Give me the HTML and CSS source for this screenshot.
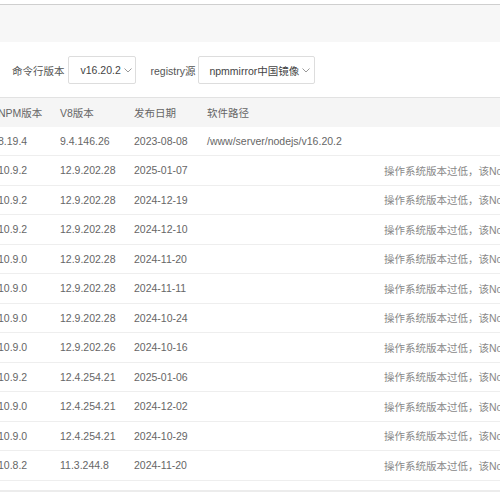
FILE: index.html
```html
<!DOCTYPE html>
<html lang="zh-CN">
<head>
  <meta charset="UTF-8" />
  <title>Node版本管理</title>
  <link rel="stylesheet" href="styles.css">
</head>
<body>
  <div class="topbar"></div>

  <div class="toolbar">
    <span class="label">命令行版本</span>
    <div class="select select-version">
      <span>v16.20.2</span>
      <svg class="caret" width="8" height="5" viewBox="0 0 8 5"><path d="M0.5 0.5 L4 4 L7.5 0.5" fill="none" stroke="#999" stroke-width="1"/></svg>
    </div>
    <span class="label">registry源</span>
    <div class="select select-registry">
      <span>npmmirror中国镜像</span>
      <svg class="caret" width="8" height="5" viewBox="0 0 8 5"><path d="M0.5 0.5 L4 4 L7.5 0.5" fill="none" stroke="#999" stroke-width="1"/></svg>
    </div>
  </div>

  <div class="table-wrap">
    <table class="versions">
      <colgroup>
        <col class="c-npm"><col class="c-v8"><col class="c-date"><col class="c-path"><col class="c-status">
      </colgroup>
      <thead>
        <tr><th>NPM版本</th><th>V8版本</th><th>发布日期</th><th>软件路径</th><th></th></tr>
      </thead>
      <tbody>
        <tr><td>8.19.4</td><td>9.4.146.26</td><td>2023-08-08</td><td>/www/server/nodejs/v16.20.2</td><td></td></tr>
        <tr><td>10.9.2</td><td>12.9.202.28</td><td>2025-01-07</td><td></td><td class="status">操作系统版本过低，该Node版本不支持</td></tr>
        <tr><td>10.9.2</td><td>12.9.202.28</td><td>2024-12-19</td><td></td><td class="status">操作系统版本过低，该Node版本不支持</td></tr>
        <tr><td>10.9.2</td><td>12.9.202.28</td><td>2024-12-10</td><td></td><td class="status">操作系统版本过低，该Node版本不支持</td></tr>
        <tr><td>10.9.0</td><td>12.9.202.28</td><td>2024-11-20</td><td></td><td class="status">操作系统版本过低，该Node版本不支持</td></tr>
        <tr><td>10.9.0</td><td>12.9.202.28</td><td>2024-11-11</td><td></td><td class="status">操作系统版本过低，该Node版本不支持</td></tr>
        <tr><td>10.9.0</td><td>12.9.202.28</td><td>2024-10-24</td><td></td><td class="status">操作系统版本过低，该Node版本不支持</td></tr>
        <tr><td>10.9.0</td><td>12.9.202.26</td><td>2024-10-16</td><td></td><td class="status">操作系统版本过低，该Node版本不支持</td></tr>
        <tr><td>10.9.2</td><td>12.4.254.21</td><td>2025-01-06</td><td></td><td class="status">操作系统版本过低，该Node版本不支持</td></tr>
        <tr><td>10.9.0</td><td>12.4.254.21</td><td>2024-12-02</td><td></td><td class="status">操作系统版本过低，该Node版本不支持</td></tr>
        <tr><td>10.9.0</td><td>12.4.254.21</td><td>2024-10-29</td><td></td><td class="status">操作系统版本过低，该Node版本不支持</td></tr>
        <tr><td>10.8.2</td><td>11.3.244.8</td><td>2024-11-20</td><td></td><td class="status">操作系统版本过低，该Node版本不支持</td></tr>
      </tbody>
    </table>
  </div>

  <div class="pager"></div>
</body>
</html>
```

FILE: styles.css
```css
html, body {
  margin: 0;
  padding: 0;
  overflow: hidden;
}
body {
  font-family: "Liberation Sans", "Noto Sans CJK SC", sans-serif;
  font-size: 10.5px;
  color: #666;
  background: #fff;
}
.topbar {
  margin-top: 4px;
  height: 37px;
  border-top: 1px solid #cfcfcf;
  background-color: #f7f7f7;
}
.toolbar {
  display: flex;
  align-items: center;
  height: 28px;
  margin-top: 14px;
  padding-left: 12px;
}
.label {
  color: #555;
  margin-right: 3px;
  white-space: nowrap;
}
.select {
  display: flex;
  flex: none;
  align-items: center;
  justify-content: space-between;
  gap: 3px;
  box-sizing: border-box;
  height: 28px;
  padding: 0 6px 0 12px;
  border: 1px solid #ddd;
  border-radius: 2px;
  color: #444;
  background: #fff;
  white-space: nowrap;
}
.select-version {
  width: 68px;
  margin-right: 15px;
}
.select-registry {
  min-width: 117px;
  padding: 0 4px 0 10px;
}
.caret {
  display: block;
  flex: none;
}
.table-wrap {
  margin-top: 13px;
  overflow: hidden;
}
.versions {
  margin-left: -12px;
  width: 760px;
  border-collapse: collapse;
  table-layout: fixed;
}
.c-npm { width: 62px; }
.c-v8 { width: 74px; }
.c-date { width: 73px; }
.c-path { width: 177px; }
.c-status { width: 374px; }
.versions th,
.versions td {
  height: 28.5px;
  padding: 0 10px;
  text-align: left;
  white-space: nowrap;
  overflow: hidden;
  border-bottom: 1px solid #eee;
}
.versions th {
  font-weight: normal;
  color: #666;
  background-color: #f5f5f5;
  border-top: 1px solid #e2e2e2;
  border-bottom: none;
}
.versions td.status {
  color: #888;
}
.pager {
  margin-top: 9px;
  border-top: 2px solid #ececec;
}
```
